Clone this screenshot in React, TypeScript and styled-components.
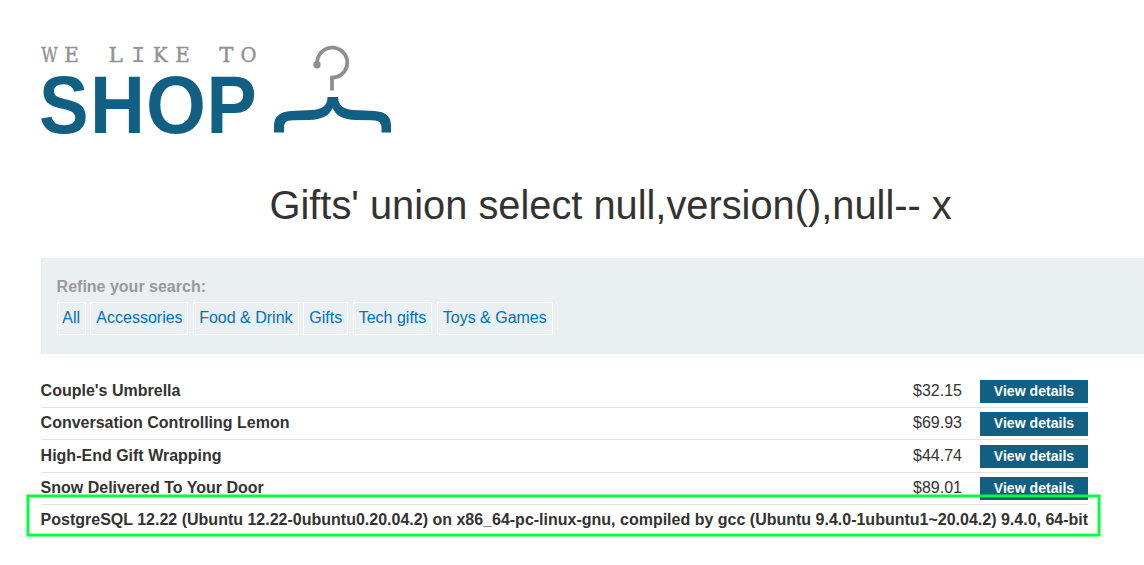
import React from "react";
import styled, { createGlobalStyle } from "styled-components";

const GlobalStyle = createGlobalStyle`
  * { box-sizing: border-box; }
  html, body { margin: 0; background: #fff; overflow: hidden; }
  body { font: 16px/1.15 "Liberation Sans", Arial, sans-serif; color: #333332; }
`;

const Page = styled.main`
  height: 565px;
  padding: 40px 0 0 40.6px;
  overflow: hidden;
`;
const Logo = styled.svg`
  display: block;
  width: 356px;
  height: 100px;
  overflow: visible;
`;
const Title = styled.h1`
  width: 1140px;
  margin: 42px 0 0;
  height: 46px;
  font-size: 39.8px;
  line-height: 46px;
  font-weight: 400;
  text-align: center;
  white-space: nowrap;
`;
const Filters = styled.section`
  height: 96px;
  margin-top: 30px;
  padding: 19px 16px 0;
  background: #eaeff2;
`;
const FilterLabel = styled.div`
  height: 25px;
  line-height: 19px;
  font-weight: 700;
  color: #999;
`;
const FilterList = styled.nav`
  display: flex;
  gap: 4.6px;
`;
const Filter = styled.a<{ $width: number }>`
  width: ${(p) => p.$width}px;
  height: 33px;
  border: 1px solid #fff;
  line-height: 29px;
  text-align: center;
  white-space: nowrap;
  color: #0071bc;
`;
const Products = styled.div`
  position: relative;
  width: 1047.4px;
  margin-top: 21.5px;
`;
const Row = styled.div<{ $last?: boolean }>`
  display: grid;
  grid-template-columns: 1fr 67px 108px;
  height: 32.36px;
  padding-top: 4.4px;
  border-bottom: ${(p) => (p.$last ? "0" : "1px solid #e2e2e2")};
  line-height: 21px;
  white-space: nowrap;
`;
const Name = styled.span`
  font-weight: 700;
`;
const Price = styled.span`
  line-height: 22px;
`;
const Button = styled.a`
  height: 23.3px;
  background: #125f84;
  color: #fff;
  font-size: 14.1px;
  font-weight: 700;
  line-height: 23px;
  text-align: center;
`;
const Highlight = styled.div`
  position: absolute;
  left: -13.6px;
  top: 119.5px;
  width: 1073px;
  height: 41px;
  border: 2px solid #00ff37;
  box-shadow: 0 0 0 1px #00ff3780, inset 0 0 0 1px #00ff3766;
`;

const tagline = [
  { char: "W", x: 41.3, width: 16.4 },
  { char: "E", x: 64.2, width: 14.6 },
  { char: "L", x: 108.4, width: 14.3 },
  { char: "I", x: 130.7, width: 14.8, mono: true },
  { char: "K", x: 153, width: 14.6 },
  { char: "E", x: 175.2, width: 14.6 },
  { char: "T", x: 219.3, width: 14.2 },
  { char: "O", x: 240.5, width: 16 },
];
const wordmark = [
  { char: "S", x: 39, width: 49.6 },
  { char: "H", x: 90, width: 55 },
  { char: "O", x: 146, width: 60 },
  { char: "P", x: 206.5, width: 50.2 },
];
const filters = [
  { label: "All", width: 29.3 },
  { label: "Accessories", width: 98 },
  { label: "Food & Drink", width: 105.6 },
  { label: "Gifts", width: 45 },
  { label: "Tech gifts", width: 79.3 },
  { label: "Toys & Games", width: 116 },
];
const products = [
  { name: "Couple's Umbrella", price: "$32.15" },
  { name: "Conversation Controlling Lemon", price: "$69.93" },
  { name: "High-End Gift Wrapping", price: "$44.74" },
  { name: "Snow Delivered To Your Door", price: "$89.01" },
];

export default function App() {
  return (
    <>
      <GlobalStyle />
      <Page>
        <Logo viewBox="41 40 356 100" role="img" aria-label="We like to shop">
          {tagline.map((l) => (
            <text
              key={l.x}
              x={l.x}
              y="61.5"
              textLength={l.width}
              lengthAdjust="spacingAndGlyphs"
              fontFamily={l.mono ? "'Liberation Mono', monospace" : "'DejaVu Serif', serif"}
              fontSize={l.mono ? 22.5 : 20}
              fill="#929292"
              stroke="#929292"
              strokeWidth={l.mono ? 0 : 0.45}
            >
              {l.char}
            </text>
          ))}
          {wordmark.map((l) => (
            <text
              key={l.x}
              x={l.x}
              y="133"
              textLength={l.width}
              lengthAdjust="spacingAndGlyphs"
              fontFamily="'Liberation Sans', Arial, sans-serif"
              fontWeight="700"
              fontSize="81.4"
              fill="#125f84"
            >
              {l.char}
            </text>
          ))}
          <path d="M317.3 64 A15 15 0 1 1 332 77.6 V90.5" fill="none" stroke="#8f8f8f" strokeWidth="3.8" />
          <circle cx="317" cy="64.7" r="3.7" fill="#8f8f8f" />
          <path
            d="M327.5 97 H338 C338.5 106 344 109.5 354 110 L374 111 C386 112 391 116 391 126 V132.6 H381.5 V128 C381.5 122.5 379 120.5 372 120.3 L356 120 C343 119.5 336 116 332.7 108 C329 116 322 119.5 309 120 L293 120.3 C286 120.5 284 122.5 284 128 V132.6 H274 V126 C274 116 280 112 291 111 L311 110 C322 109.5 327.5 106 327.5 97 Z"
            fill="#125f84"
          />
        </Logo>
        <Title>Gifts' union select null,version(),null-- x</Title>
        <Filters>
          <FilterLabel>Refine your search:</FilterLabel>
          <FilterList>
            {filters.map((f) => (
              <Filter key={f.label} $width={f.width}>{f.label}</Filter>
            ))}
          </FilterList>
        </Filters>
        <Products>
          {products.map((p) => (
            <Row key={p.name}>
              <Name>{p.name}</Name>
              <Price>{p.price}</Price>
              <Button>View details</Button>
            </Row>
          ))}
          <Row $last>
            <Name>
              PostgreSQL 12.22 (Ubuntu 12.22-0ubuntu0.20.04.2) on x86_64-pc-linux-gnu, compiled by gcc (Ubuntu
              9.4.0-1ubuntu1~20.04.2) 9.4.0, 64-bit
            </Name>
          </Row>
          <Highlight />
        </Products>
      </Page>
    </>
  );
}
